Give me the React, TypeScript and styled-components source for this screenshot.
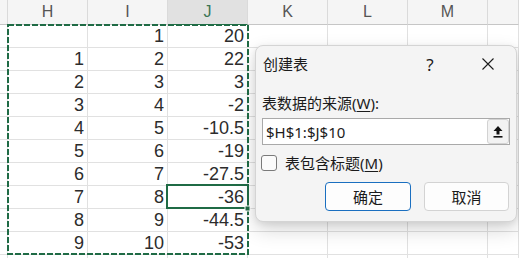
import styled, { createGlobalStyle } from "styled-components";

const GlobalStyle = createGlobalStyle`
  html, body {
    margin: 0;
    padding: 0;
    background: #ffffff;
    overflow: hidden;
  }
`;

const Sheet = styled.div`
  position: relative;
  width: 519px;
  height: 258px;
  overflow: hidden;
  display: grid;
  grid-template-columns: 8px repeat(6, 80px) 1fr;
  grid-template-rows: 25px;
  grid-auto-rows: 23px;
  font-family: "Liberation Sans", "Noto Sans", sans-serif;
`;

const HeadCell = styled.div<{ $active?: boolean }>`
  box-sizing: border-box;
  display: flex;
  align-items: center;
  justify-content: center;
  background: ${(p) => (p.$active ? "#e1e1e1" : "#f5f5f5")};
  border-right: 1px solid #dadada;
  border-bottom: 1px solid ${(p) => (p.$active ? "#217346" : "#c6c6c6")};
  font-size: 16px;
  color: ${(p) => (p.$active ? "#3b7555" : "#555555")};
`;

const Cell = styled.div`
  box-sizing: border-box;
  display: flex;
  align-items: center;
  justify-content: flex-end;
  padding-right: 3px;
  border-right: 1px solid #e1e1e1;
  border-bottom: 1px solid #e1e1e1;
  font-size: 18px;
  color: #2c2c2c;
`;

const Overlay = styled.svg`
  position: absolute;
  left: 0;
  top: 0;
  pointer-events: none;
`;

const Dialog = styled.div`
  position: absolute;
  left: 255px;
  top: 45px;
  width: 262px;
  height: 177px;
  box-sizing: border-box;
  display: flex;
  flex-direction: column;
  padding: 0 6px 10px 6px;
  background: #f4f4f4;
  border: 1px solid #d4d4d4;
  border-radius: 8px;
  box-shadow: 0 8px 20px rgba(0, 0, 0, 0.16), 0 2px 6px rgba(0, 0, 0, 0.08);
  font-family: "Noto Sans", "Noto Sans CJK SC", sans-serif;
  font-size: 15px;
  color: #1b1b1b;
`;

const TitleBar = styled.div`
  height: 36px;
  display: flex;
  align-items: center;
  margin-right: -6px;
`;

const Title = styled.div`
  flex: 1;
  padding-left: 1px;
  line-height: 20px;
`;

const HelpButton = styled.div`
  width: 60px;
  height: 36px;
  display: flex;
  align-items: center;
  justify-content: center;
  font-size: 17px;
`;

const CloseButton = styled.div`
  width: 56px;
  height: 36px;
  display: flex;
  align-items: center;
  justify-content: center;
`;

const Label = styled.div`
  margin-top: 11px;
  line-height: 20px;
  height: 20px;
`;

const Key = styled.span`
  text-decoration: underline;
  text-underline-offset: 2px;
`;

const RangeInput = styled.div`
  margin-top: 5px;
  height: 27px;
  box-sizing: border-box;
  display: flex;
  align-items: center;
  background: #ffffff;
  border: 1px solid #a9a9a9;
  padding-left: 3px;
`;

const RangeText = styled.div`
  flex: 1;
  line-height: 20px;
`;

const PickButton = styled.div`
  width: 22px;
  height: 25px;
  box-sizing: border-box;
  display: flex;
  align-items: center;
  justify-content: center;
  background: #f2f2f2;
  border: 1px solid #d2d2d2;
  border-radius: 3px;
`;

const CheckRow = styled.div`
  margin-top: 8px;
  height: 20px;
  display: flex;
  align-items: center;
  gap: 8px;
  margin-left: -1px;
  line-height: 20px;
`;

const Box = styled.div`
  width: 16px;
  height: 16px;
  box-sizing: border-box;
  border: 1px solid #7a7a7a;
  border-radius: 3px;
  background: #fbfbfb;
`;

const ButtonRow = styled.div`
  margin-top: 9px;
  display: flex;
  justify-content: flex-end;
  gap: 13px;
  margin-right: 1px;
`;

const Btn = styled.div<{ $primary?: boolean; $w: number }>`
  width: ${(p) => p.$w}px;
  height: 29px;
  box-sizing: border-box;
  display: flex;
  align-items: center;
  justify-content: center;
  background: #fdfdfd;
  border: 1px solid ${(p) => (p.$primary ? "#1a6fc0" : "#d3d3d3")};
  border-radius: 4px;
  line-height: 20px;
`;

const columns = ["", "H", "I", "J", "K", "L", "M", ""];

const rows: [string, string, string][] = [
  ["", "1", "20"],
  ["1", "2", "22"],
  ["2", "3", "3"],
  ["3", "4", "-2"],
  ["4", "5", "-10.5"],
  ["5", "6", "-19"],
  ["6", "7", "-27.5"],
  ["7", "8", "-36"],
  ["8", "9", "-44.5"],
  ["9", "10", "-53"],
  ["", "", ""],
];

function App() {
  return (
    <>
      <GlobalStyle />
      <Sheet>
        {columns.map((c, i) => (
          <HeadCell key={"h" + i} $active={c === "J"}>
            {c}
          </HeadCell>
        ))}
        {rows.map((r, ri) =>
          columns.map((c, ci) => (
            <Cell key={ri + "-" + ci}>
              {c === "H" ? r[0] : c === "I" ? r[1] : c === "J" ? r[2] : ""}
            </Cell>
          ))
        )}

        <Overlay width="519" height="258">
          <rect x="167" y="185" width="81" height="23" fill="none" stroke="#1f6b45" strokeWidth="2" />
          <rect x="8" y="25" width="240" height="229" fill="none" stroke="#1f6b45" strokeWidth="2" strokeDasharray="6 2" />
          <rect x="245" y="206" width="5" height="5" fill="#1f6b45" stroke="#ffffff" strokeWidth="1" />
        </Overlay>

        <Dialog>
          <TitleBar>
            <Title>创建表</Title>
            <HelpButton>?</HelpButton>
            <CloseButton>
              <svg width="12" height="12" viewBox="0 0 12 12">
                <path d="M0.5 0.5 L11.5 11.5 M11.5 0.5 L0.5 11.5" stroke="#1b1b1b" strokeWidth="1.1" />
              </svg>
            </CloseButton>
          </TitleBar>
          <Label>
            表数据的来源(<Key>W</Key>):
          </Label>
          <RangeInput>
            <RangeText>$H$1:$J$10</RangeText>
            <PickButton>
              <svg width="10" height="12" viewBox="0 0 10 12">
                <path d="M5 0 L9.5 5 L6.5 5 L6.5 8.5 L3.5 8.5 L3.5 5 L0.5 5 Z" fill="#111111" />
                <rect x="0.5" y="10" width="9" height="1.6" fill="#111111" />
              </svg>
            </PickButton>
          </RangeInput>
          <CheckRow>
            <Box />
            <span>
              表包含标题(<Key>M</Key>)
            </span>
          </CheckRow>
          <ButtonRow>
            <Btn $primary $w={86}>确定</Btn>
            <Btn $w={85}>取消</Btn>
          </ButtonRow>
        </Dialog>
      </Sheet>
    </>
  );
}

export default App;
